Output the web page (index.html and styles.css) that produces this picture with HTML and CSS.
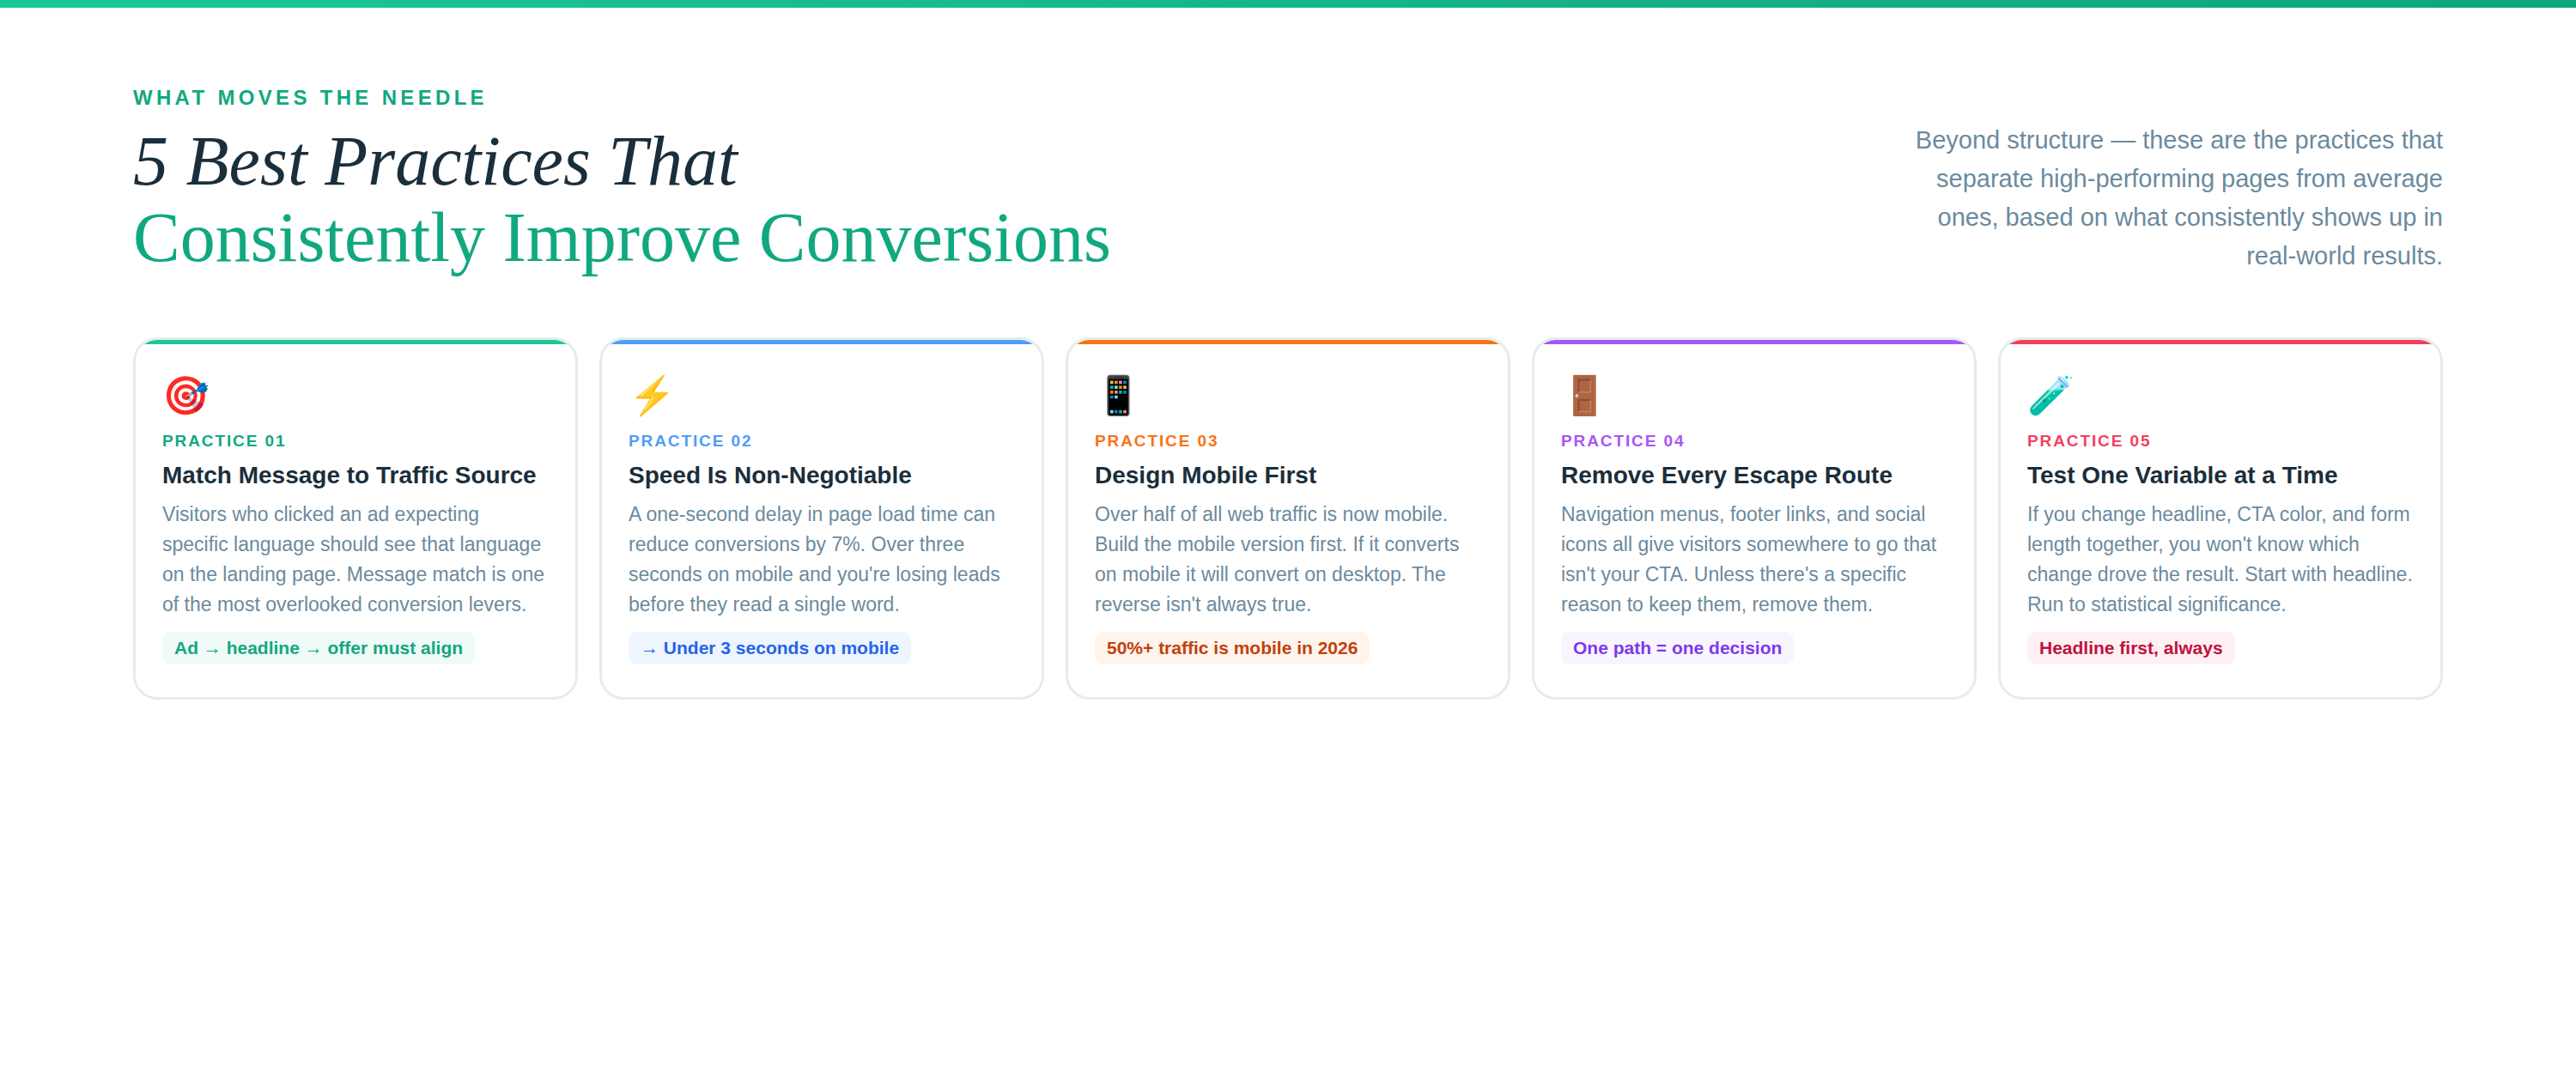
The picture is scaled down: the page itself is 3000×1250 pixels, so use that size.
FILE: index.html
```html
<!DOCTYPE html>
<html lang="en">
<head>
<meta charset="utf-8">
<title>5 Best Practices</title>
<link rel="stylesheet" href="styles.css">
</head>
<body>
<div class="topbar"></div>
<main class="page">
  <header class="header">
    <div class="intro">
      <div class="eyebrow">WHAT MOVES THE NEEDLE</div>
      <h1 class="title"><em>5 Best Practices That</em><br><span class="accent">Consistently Improve Conversions</span></h1>
    </div>
    <p class="lede">Beyond structure — these are the practices that separate high-performing pages from average ones, based on what consistently shows up in real-world results.</p>
  </header>
  <section class="cards">
    <article class="card c1">
      <div class="icon">🎯</div>
      <div class="label">PRACTICE 01</div>
      <h2 class="name">Match Message to Traffic Source</h2>
      <p class="body">Visitors who clicked an ad expecting specific language should see that language on the landing page. Message match is one of the most overlooked conversion levers.</p>
      <span class="tag">Ad → headline → offer must align</span>
    </article>
    <article class="card c2">
      <div class="icon">⚡</div>
      <div class="label">PRACTICE 02</div>
      <h2 class="name">Speed Is Non-Negotiable</h2>
      <p class="body">A one-second delay in page load time can reduce conversions by 7%. Over three seconds on mobile and you're losing leads before they read a single word.</p>
      <span class="tag">→ Under 3 seconds on mobile</span>
    </article>
    <article class="card c3">
      <div class="icon">📱</div>
      <div class="label">PRACTICE 03</div>
      <h2 class="name">Design Mobile First</h2>
      <p class="body">Over half of all web traffic is now mobile. Build the mobile version first. If it converts on mobile it will convert on desktop. The reverse isn't always true.</p>
      <span class="tag">50%+ traffic is mobile in 2026</span>
    </article>
    <article class="card c4">
      <div class="icon">🚪</div>
      <div class="label">PRACTICE 04</div>
      <h2 class="name">Remove Every Escape Route</h2>
      <p class="body">Navigation menus, footer links, and social icons all give visitors somewhere to go that isn't your CTA. Unless there's a specific reason to keep them, remove them.</p>
      <span class="tag">One path = one decision</span>
    </article>
    <article class="card c5">
      <div class="icon">🧪</div>
      <div class="label">PRACTICE 05</div>
      <h2 class="name">Test One Variable at a Time</h2>
      <p class="body">If you change headline, CTA color, and form length together, you won't know which change drove the result. Start with headline. Run to statistical significance.</p>
      <span class="tag">Headline first, always</span>
    </article>
  </section>
</main>
</body>
</html>
```
FILE: styles.css
```css
* { box-sizing: border-box; }
html, body { margin: 0; padding: 0; background: #fff; }
body { font-family: "Liberation Sans", Arial, sans-serif; color: #1a2e3b; }
.topbar { height: 9px; background: linear-gradient(90deg, #1ac89a, #0fa57a); }
.page { padding: 90px 155px 0; }
.header { display: flex; justify-content: space-between; align-items: flex-end; margin-bottom: 72px; }
.eyebrow { font-size: 24px; font-weight: 700; letter-spacing: 4.32px; color: #11a880; line-height: 30px; margin-bottom: 14px; }
.title { margin: 0; font-family: "Liberation Serif", "Times New Roman", serif; font-weight: 400; font-size: 82px; line-height: 89px; color: #1a2e3b; }
.title em { font-style: italic; }
.accent { color: #11a880; }
.lede { margin: 0; width: 640px; text-align: right; font-size: 29px; line-height: 45px; color: #6b8a9e; }
.cards { display: grid; grid-template-columns: repeat(5, 1fr); gap: 25px; }
.card { position: relative; overflow: hidden; background: #fff; border: 3px solid #e2eeea; border-radius: 28px; padding: 36px 31px 38px; }
.card::before { content: ""; position: absolute; left: 0; right: 0; top: 0; height: 5px; background: var(--stripe); }
.icon { font-size: 44px; line-height: 58px; font-family: "Noto Color Emoji", sans-serif; margin-bottom: 12px; }
.label { font-size: 19px; font-weight: 700; letter-spacing: 1.9px; line-height: 24px; color: var(--stripe); margin-bottom: 8px; }
.name { margin: 0 0 8px; font-size: 28px; font-weight: 700; line-height: 40px; color: #1a2e3b; }
.body { margin: 0 0 14px; font-size: 23px; line-height: 35px; color: #6b8a9e; }
.tag { display: inline-block; padding: 0 14px; height: 38px; line-height: 38px; border-radius: 10px; font-size: 21px; font-weight: 700; }
.c1 { --stripe: #1ac89a; } .c1 .label { color: #11a880; } .c1 .tag { background: #f0faf7; color: #11a880; }
.c2 { --stripe: #4f9cf9; } .c2 .tag { background: #eff5ff; color: #2563eb; }
.c3 { --stripe: #f97316; } .c3 .tag { background: #fff5ec; color: #c2410c; }
.c4 { --stripe: #a855f7; } .c4 .tag { background: #f9f5ff; color: #7c3aed; }
.c5 { --stripe: #f43f5e; } .c5 .tag { background: #fff1f3; color: #be123c; }
```
